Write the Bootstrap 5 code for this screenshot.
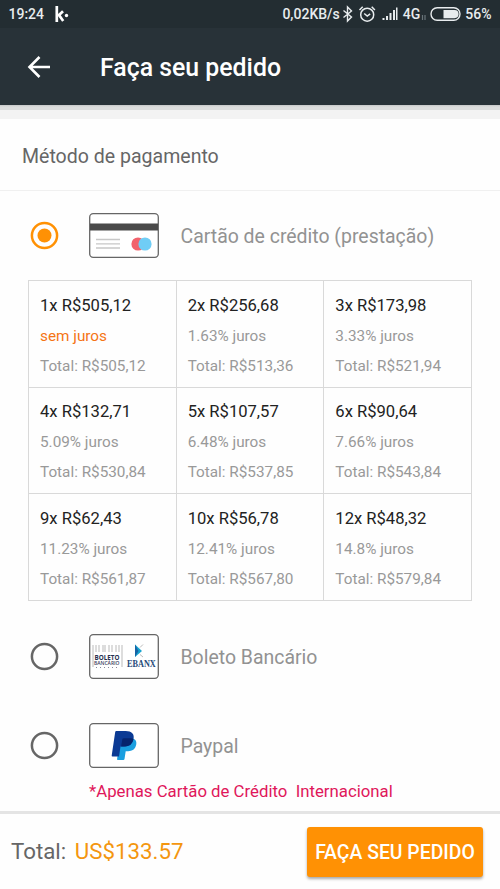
<!DOCTYPE html>
<html lang="pt-BR">
<head>
<meta charset="utf-8">
<meta name="viewport" content="width=device-width, initial-scale=1">
<title>Faça seu pedido</title>
<link href="https://cdn.jsdelivr.net/npm/bootstrap@5.3.0/dist/css/bootstrap.min.css" rel="stylesheet">
<style>
body{font-family:Roboto,"Liberation Sans",sans-serif;background:#fefefe;color:#666;height:889px;overflow:hidden}
svg{display:block;flex:none}
.status-bar{height:28px;background:#232d32;color:#e8ecee;font-size:14px;font-weight:500;padding:0 8.5px}
.net-speed{margin-right:1px}
.app-bar{height:77px;background:#283238;color:#fff;padding-left:27px}
.app-title{font-size:24.85px;font-weight:500;line-height:32px;margin-left:49px;padding-top:2px}
.bar-shadow{height:5px;background:linear-gradient(#c5c7c8,#dcdddd 40%,#dcdddd)}
.gap-strip{height:9px;background:#f3f3f3}
.section-title{height:72px;border-bottom:1px solid #f0f0f0;padding:4px 22px 0;font-size:19.55px}
.option-row{padding-left:29.5px}
.option-label{font-size:19.45px;color:#929292;line-height:30px;margin-left:22px;padding-top:3px}
.option-icon{margin-left:30px}
.plans{margin:0 28px;width:444px;border-top:1px solid #d9d9d9;border-left:1px solid #d9d9d9}
.plan{height:106.5px;border-right:1px solid #d9d9d9;border-bottom:1px solid #d9d9d9;padding:8.5px 0 0 11px;font-size:15.3px;line-height:30.4px;color:#999;white-space:nowrap}
.plan-price{font-size:16.6px;color:#222;line-height:31px}
.free{color:#f57414}
.note{margin-left:89px;font-size:16.77px;line-height:24px;color:#e0175b;white-space:pre}
.pay-bar{height:78px;border-top:3px solid #e4e4e4;padding:0 17px 0 11px;font-size:22.3px}
.amount{color:#f4960f;margin-left:3px}
.btn-order{background:#ff9104;color:#fff;border:0;border-radius:3px;width:176px;height:50px;padding:2px 0 0;font-size:19.4px;font-weight:500;box-shadow:0 2px 3px #0005;white-space:nowrap}
</style>
</head>
<body class="d-flex flex-column">
<header>
  <div class="status-bar d-flex align-items-center">
    <span>19:24</span>
    <svg class="ms-2" width="18" height="20" viewBox="0 0 18 20"><path d="M4.800 2v16M11 7.200 6 12M7 11l4.200 6" fill="none" stroke="#fff" stroke-width="2.700"/><circle cx="14.500" cy="11.500" r="1.700" fill="#fff"/></svg>
    <span class="ms-auto net-speed">0,02KB/s</span>
    <svg width="17" height="18" viewBox="0 0 17 18"><path d="M2.500 5.500 10.500 12 6.500 16V2l4 4-8 6.500" fill="none" stroke="#e8ecee" stroke-width="1.400"/></svg>
    <svg width="20" height="18" viewBox="0 0 20 18"><g fill="none" stroke="#e8ecee" stroke-width="1.500"><circle cx="9.200" cy="9.700" r="6.500"/><path d="M6.200 8.500l3 2.500 3-2.200M1.500 5l3.200-3.300M16.900 5l-3.200-3.300"/></g></svg>
    <svg class="ms-1" width="17" height="18" viewBox="0 0 17 18"><path d="M.5 15v-2h2v2zM4 15v-4h2v4zM7.500 15V8h2v7zM11 15V5h2v10zM14 15V2.500h1.500V15z" fill="#e8ecee"/></svg>
    <span class="ms-1">4G</span>
    <svg width="10" height="18" viewBox="0 0 10 18"><path d="M2.500 10v5M5 10v5" stroke="#69747a" stroke-width="1.200"/></svg>
    <svg width="31" height="18" viewBox="0 0 31 18"><rect x="1" y="2.800" width="29" height="12.500" rx="6.200" fill="none" stroke="#e8ecee" stroke-width="1.400"/><path d="M13.500 5H24.500a4.100 4.100 0 0 1 0 8.200H13.500z" fill="#e8ecee"/></svg>
    <span class="ms-1">56%</span>
  </div>
  <div class="app-bar d-flex align-items-center">
    <svg width="24" height="24" viewBox="0 0 24 24"><path d="M23 12H3M12.500 2 2.500 12l10 10" fill="none" stroke="#fff" stroke-width="2.600"/></svg>
    <h1 class="app-title mb-0">Faça seu pedido</h1>
  </div>
  <div class="bar-shadow"></div>
  <div class="gap-strip"></div>
</header>
<main class="flex-grow-1 overflow-hidden">
  <div class="section-title d-flex align-items-center">Método de pagamento</div>
  <div class="option-row d-flex align-items-center" style="height:89px">
    <svg width="29" height="29" viewBox="0 0 29 29"><circle cx="14.500" cy="14.500" r="12.600" fill="none" stroke="#ff9104" stroke-width="2.500"/><circle cx="14.500" cy="14.500" r="7" fill="#ff9104"/></svg>
    <svg class="option-icon" width="70" height="45" viewBox="0 0 70 45"><rect x=".7" y=".7" width="68.600" height="43.600" rx="3.500" fill="#fff" stroke="#666" stroke-width="1.300"/><path d="M1 10.500h68v7H1z" fill="#4a4a4a"/><path d="M7 26.500h24M7 30.800h24M7 35h24" stroke="#c8c8c8" stroke-width="1.300"/><circle cx="49" cy="31" r="6.600" fill="#f2626c"/><circle cx="56" cy="31" r="6.600" fill="#70cdf5"/></svg>
    <span class="option-label">Cartão de crédito (prestação)</span>
  </div>
  <div class="plans row g-0">
    <div class="col-4 plan"><div class="plan-price">1x R$505,12</div><div class="free">sem juros</div><div>Total: R$505,12</div></div>
    <div class="col-4 plan"><div class="plan-price">2x R$256,68</div><div>1.63% juros</div><div>Total: R$513,36</div></div>
    <div class="col-4 plan"><div class="plan-price">3x R$173,98</div><div>3.33% juros</div><div>Total: R$521,94</div></div>
    <div class="col-4 plan"><div class="plan-price">4x R$132,71</div><div>5.09% juros</div><div>Total: R$530,84</div></div>
    <div class="col-4 plan"><div class="plan-price">5x R$107,57</div><div>6.48% juros</div><div>Total: R$537,85</div></div>
    <div class="col-4 plan"><div class="plan-price">6x R$90,64</div><div>7.66% juros</div><div>Total: R$543,84</div></div>
    <div class="col-4 plan"><div class="plan-price">9x R$62,43</div><div>11.23% juros</div><div>Total: R$561,87</div></div>
    <div class="col-4 plan"><div class="plan-price">10x R$56,78</div><div>12.41% juros</div><div>Total: R$567,80</div></div>
    <div class="col-4 plan"><div class="plan-price">12x R$48,32</div><div>14.8% juros</div><div>Total: R$579,84</div></div>
  </div>
  <div class="option-row d-flex align-items-center" style="height:112px">
    <svg width="29" height="29" viewBox="0 0 29 29"><circle cx="14.500" cy="14.500" r="12.600" fill="none" stroke="#666" stroke-width="2.500"/></svg>
    <svg class="option-icon" width="70" height="45" viewBox="0 0 70 45"><rect x=".7" y=".7" width="68.600" height="43.600" rx="3.500" fill="#fff" stroke="#666" stroke-width="1.300"/><path d="M4 11v22M7 11v7M10 11v7M14 11v7M16 11v7M20 11v7M23 11v7M27 11v7M30 11v7M33 11v22" stroke="#aaa" stroke-width=".8"/><path d="M7 33.500h24" stroke="#889" stroke-width="1" stroke-dasharray="1 3"/><text x="5.500" y="25.500" font-family="Open Sans,sans-serif" font-weight="700" font-size="6.600" textLength="25" lengthAdjust="spacingAndGlyphs" fill="#26304f">BOLETO</text><text x="5" y="31.300" font-family="Open Sans,sans-serif" font-weight="600" font-size="5" textLength="25.500" lengthAdjust="spacingAndGlyphs" fill="#3a4260">BANCÁRIO</text><path d="M46 10.500 53 17 46 23z" fill="#17a4cf"/><path d="M46 10.500 49.500 17 46 23z" fill="#1764a5"/><path d="M51 13.500 54 10.500M51 20.500 54 23" stroke="#aaa" stroke-width=".8"/><text transform="translate(38 33) scale(.84 1)" font-family="Liberation Serif,serif" font-weight="700" font-size="9.800" fill="#1e4978">EBANX</text></svg>
    <span class="option-label">Boleto Bancário</span>
  </div>
  <div class="option-row d-flex align-items-center" style="height:66px">
    <svg width="29" height="29" viewBox="0 0 29 29"><circle cx="14.500" cy="14.500" r="12.600" fill="none" stroke="#666" stroke-width="2.500"/></svg>
    <svg class="option-icon" width="70" height="45" viewBox="0 0 70 45"><rect x=".7" y=".7" width="68.600" height="43.600" rx="3.500" fill="#fff" stroke="#666" stroke-width="1.300"/><path d="M31 15.500h11.500c3.800 0 5.500 2.500 4.700 6.300-1 4.500-4 6.400-8 6.400h-2.500L35.500 36q-.2 1-1.200 1h-5.500q-.9 0-.7-1z" fill="#1a9fe0"/><path d="M27.200 8h9.500c6 0 9 3 7.800 8-1 5-4.500 7.500-9.500 7.500h-3.500L30 33.500h-6.500q-1 0-.8-1L26.200 9q.2-1 1-1z" fill="#0b3a94"/><path d="M33.300 16.500q.3-1.200 1.500-1.200h7q1.500 0 2.600.7-1 7.500-9.300 7.500h-3z" fill="#06246d"/></svg>
    <span class="option-label">Paypal</span>
  </div>
  <div class="note">*Apenas Cartão de Crédito  Internacional</div>
</main>
<footer class="pay-bar d-flex align-items-center justify-content-between">
  <div>Total: <span class="amount">US$133.57</span></div>
  <button type="button" class="btn btn-order">FAÇA SEU PEDIDO</button>
</footer>
<script src="https://cdn.jsdelivr.net/npm/bootstrap@5.3.0/dist/js/bootstrap.bundle.min.js"></script>
</body>
</html>
